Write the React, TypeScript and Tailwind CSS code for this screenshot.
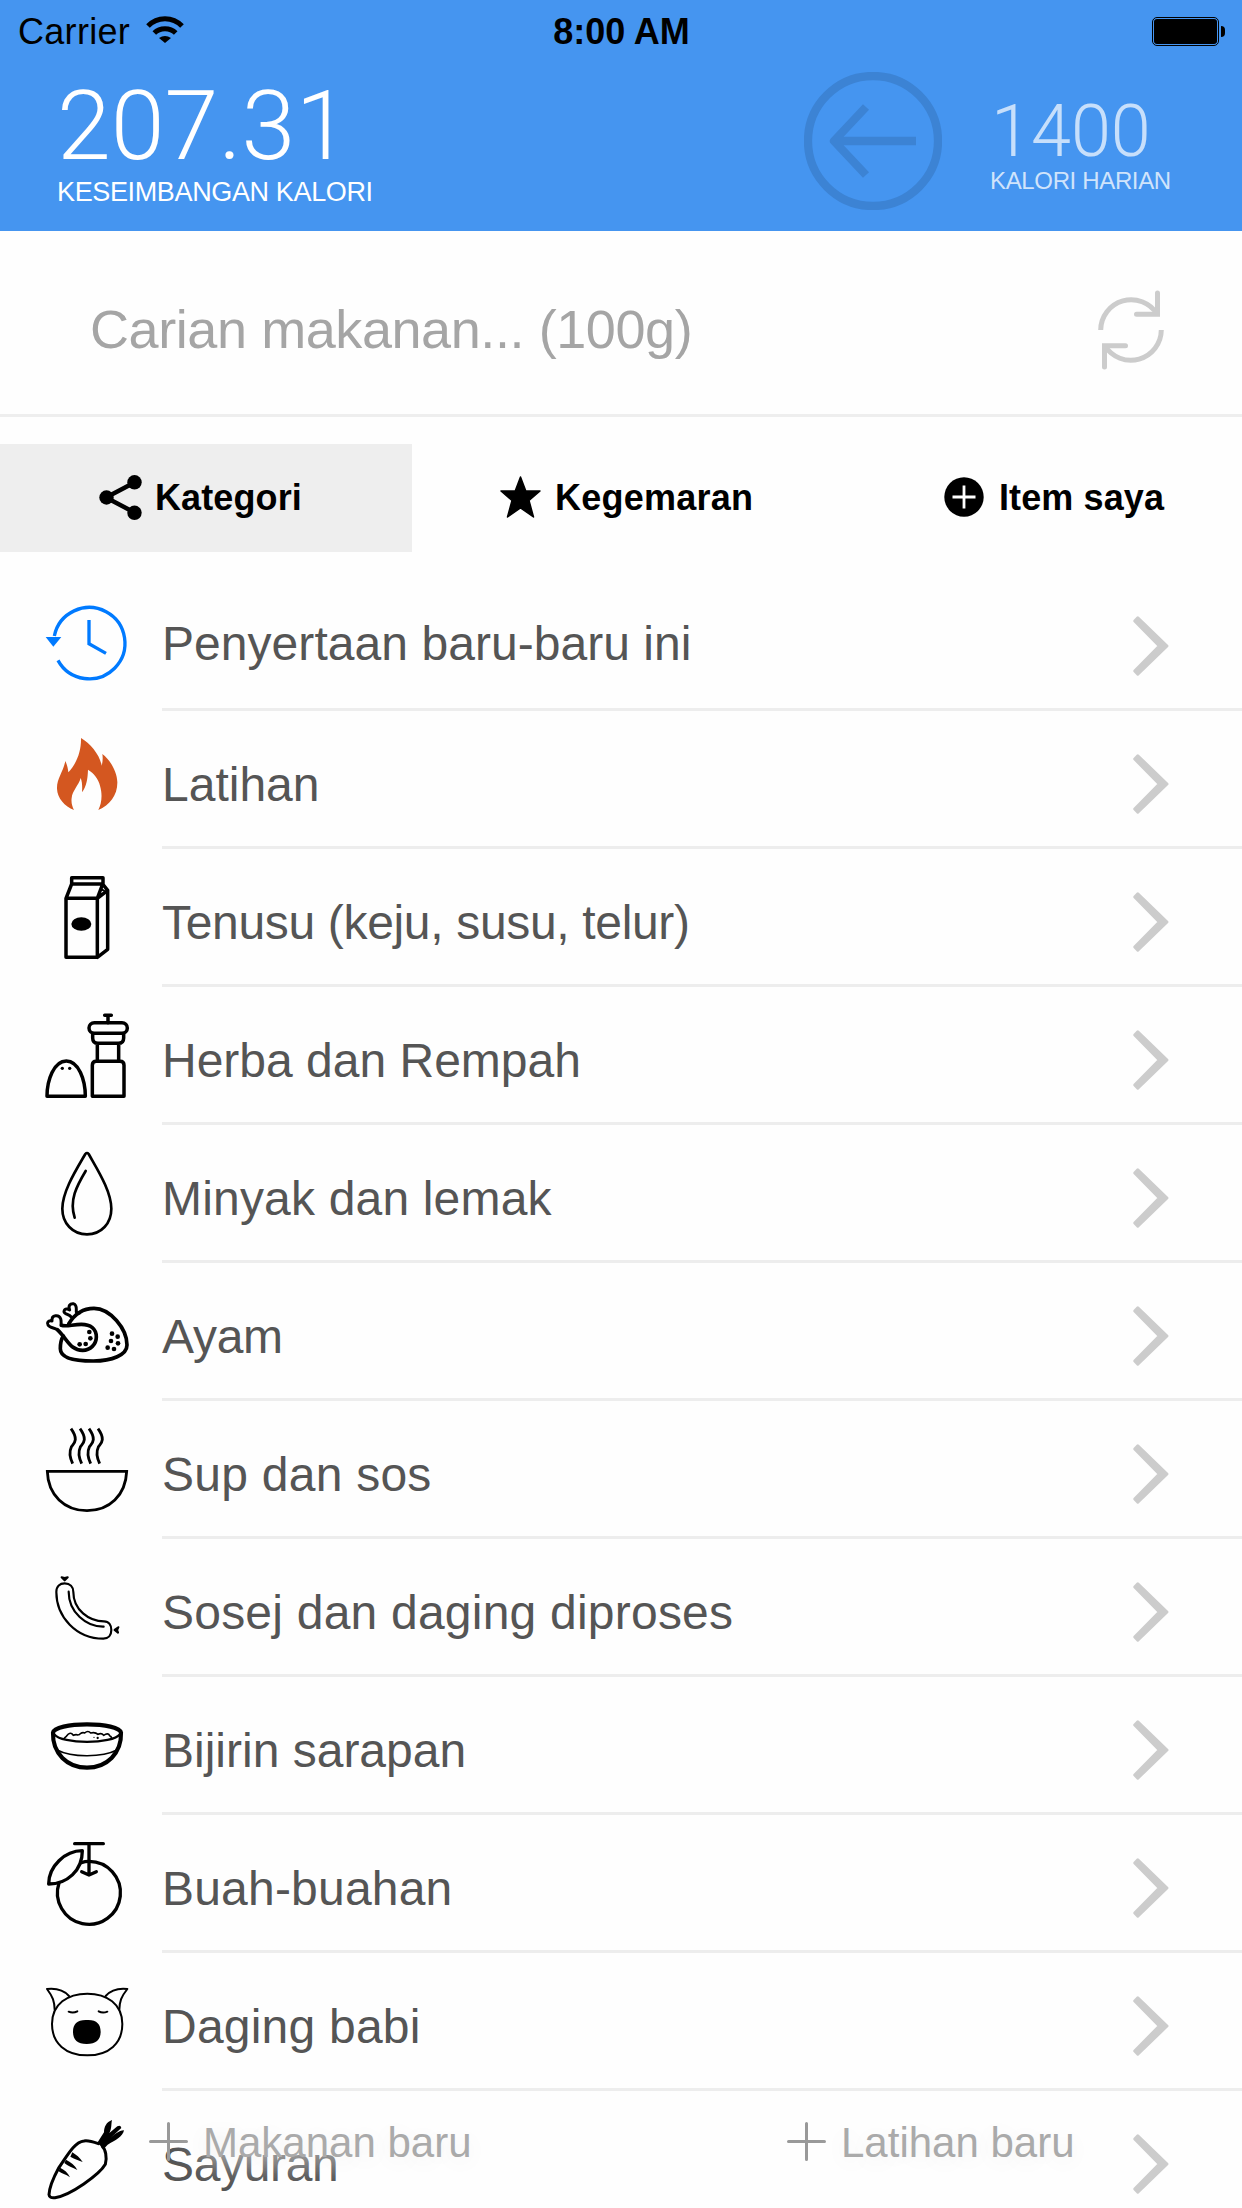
import type { ReactNode } from "react";

type Row = { label: string; tracking: string; viewBox: string; icon: ReactNode };

const stroke = {
  fill: "none",
  stroke: "#000",
  strokeLinejoin: "round" as const,
  strokeLinecap: "round" as const,
};

const rows: Row[] = [
  {
    label: "Penyertaan baru-baru ini",
    tracking: "tracking-[0.05px]",
    viewBox: "-60 -21 486 414",
    icon: (
      <g fill="none" stroke="#007aff" strokeWidth="10">
        <path d="M103 168A107 107 0 1 1 114 241" />
        <path d="M207 120V191L258 220" />
        <path d="M77 171H124L100 200Z" fill="#007aff" stroke="none" />
      </g>
    ),
  },
  {
    label: "Latihan",
    tracking: "tracking-normal",
    viewBox: "-60 393 486 414",
    icon: (
      <path
        fill="#d45720"
        d="M183 474C211 490 240 525 245 557C248 546 249 534 247 522C271 540 291 575 292 606C293 645 270 675 235 690C245 671 248 644 240 617C234 595 222 580 204 569C203 596 200 618 186 637C187 621 187 606 182 594C176 616 157 632 155 654C153 668 157 680 162 690C134 678 112 655 111 626C110 596 130 575 136 543C141 554 144 565 145 577C170 550 184 515 183 474Z"
      />
    ),
  },
  {
    label: "Tenusu (keju, susu, telur)",
    tracking: "tracking-[-0.33px]",
    viewBox: "-60 -3 486 414",
    icon: (
      <g {...stroke} strokeWidth="10.5">
        <path d="M155 102V83H249V102ZM155 102L138 145V322H232V145L248 102M138 145H232M232 322L263 298V121L248 102M232 145L263 121" />
        <path d="M244 118L252 122" strokeWidth="6" />
        <ellipse cx="184" cy="222" rx="30" ry="20" fill="#000" stroke="none" />
      </g>
    ),
  },
  {
    label: "Herba dan Rempah",
    tracking: "tracking-normal",
    viewBox: "-60 411 486 414",
    icon: (
      <g {...stroke} strokeWidth="10.5">
        <path d="M81 739H196C196 690 176 633 139 633C102 633 81 690 81 739Z" />
        <circle cx="127" cy="655" r="5" fill="#000" stroke="none" />
        <circle cx="149" cy="655" r="5" fill="#000" stroke="none" />
        <path d="M254 496H274M264 496V518" />
        <rect x="207" y="518" width="115" height="32" rx="16" />
        <path d="M218 552V564Q218 580 234 580H295Q311 580 311 564V552M232 582V633M296 582V633" />
        <path d="M217 739V646Q217 634 229 634H300Q312 634 312 646V739Z" />
      </g>
    ),
  },
  {
    label: "Minyak dan lemak",
    tracking: "tracking-[0.18px]",
    viewBox: "-60 -15 486 414",
    icon: (
      <g {...stroke} strokeWidth="8">
        <path d="M196 72Q201 66 206 72C231 117 274 183 274 236C274 280 244 313 201 313C158 313 127 280 127 236C127 184 170 117 196 72Z" />
        <path d="M197 123C170 168 147 211 164 263" />
      </g>
    ),
  },
  {
    label: "Ayam",
    tracking: "tracking-[-0.25px]",
    viewBox: "-60 399 486 414",
    icon: (
      <g {...stroke} strokeWidth="11">
        <path d="M146 582C163 553 190 535 222 535C270 535 321 596 321 645C321 675 276 693 220 693C164 693 121 684 121 656C121 638 123 628 130 618" />
        <path d="M124 586C140 591 158 583 184 583C212 583 229 597 229 621C229 643 211 661 188 661C150 661 143 628 112 599" />
        <path d="M124 586C122 579 125 574 122 566C117 553 94 553 96 573C84 570 80 579 84 585C89 594 103 593 112 599" strokeWidth="9" />
        <path d="M153 560C147 553 133 552 132 545C133 535 143 536 149 540C144 527 150 520 160 521C173 525 168 539 169 546Q172 550 179 549" strokeWidth="9" />
        <g fill="#000" stroke="none">
          <circle cx="208" cy="606" r="7" />
          <circle cx="211" cy="625" r="7" />
          <circle cx="179" cy="643" r="7" />
          <circle cx="197" cy="642" r="7" />
          <circle cx="276" cy="611" r="7" />
          <circle cx="293" cy="620" r="7" />
          <circle cx="273" cy="633" r="7" />
          <circle cx="294" cy="640" r="7" />
          <circle cx="263" cy="653" r="7" />
          <circle cx="282" cy="657" r="7" />
        </g>
      </g>
    ),
  },
  {
    label: "Sup dan sos",
    tracking: "tracking-[0.25px]",
    viewBox: "-60 3 486 414",
    icon: (
      <g fill="none" stroke="#000" strokeWidth="8.500">
        <path d="M82 214H320C317 286 268 332 201 332C134 332 84 286 82 214Z" />
        <path d="M153 86C179 122 159 132 154 141C147 156 150 174 158 191" />
        <path d="M180 86C206 122 186 132 181 141C174 156 177 174 185 191" />
        <path d="M207 86C233 122 213 132 208 141C201 156 204 174 212 191" />
        <path d="M234 86C260 122 240 132 235 141C228 156 231 174 239 191" />
      </g>
    ),
  },
  {
    label: "Sosej dan daging diproses",
    tracking: "tracking-[0.22px]",
    viewBox: "-60 417 486 414",
    icon: (
      <g {...stroke} strokeWidth="6.500">
        <path d="M109 576C109 558 120 550 134 550C150 550 160 560 160 576C160 630 207 664 252 664C267 664 274 676 274 690C274 706 265 716 250 716C169 716 109 651 109 576Z" />
        <path d="M146 575C146 637 199 681 251 680" />
        <path d="M125 532L134 541L143 532L134 534ZM295 682L284 690L294 698L291 690Z" fill="#000" />
      </g>
    ),
  },
  {
    label: "Bijirin sarapan",
    tracking: "tracking-normal",
    viewBox: "-60 -39 486 414",
    icon: (
      <g {...stroke}>
        <path
          strokeWidth="12.500"
          d="M99 128C102 113 147 103 201 103C255 103 300 113 303 128C305 190 260 233 201 233C142 233 97 190 99 128Z"
        />
        <path strokeWidth="7" d="M103 133C125 163 277 163 300 133" />
        <path strokeWidth="5" d="M113 181C154 203 249 202 289 181" />
        <path
          strokeWidth="5"
          d="M131 147Q136 141 139 139Q151 122 160 136Q168 132 173 135Q179 135 181 131Q188 126 194 129Q204 120 212 129Q225 125 234 133Q244 127 251 136Q264 127 269 137Q276 140 275 147"
        />
        <circle cx="233" cy="144" r="3.500" fill="#000" stroke="none" />
        <circle cx="222" cy="142" r="2" fill="#000" stroke="none" />
      </g>
    ),
  },
  {
    label: "Buah-buahan",
    tracking: "tracking-[0.2px]",
    viewBox: "-60 375 486 414",
    icon: (
      <g {...stroke} strokeWidth="10">
        <path d="M164 461H250M207 463V555M185 545L207 555L229 545" />
        <path d="M184 518Q195 514 207 514A94.500 94.500 0 1 1 117 579" />
        <path d="M187 482C135 482 86 529 86 582C141 582 187 542 187 482Z" />
      </g>
    ),
  },
  {
    label: "Daging babi",
    tracking: "tracking-[0.22px]",
    viewBox: "-60 -21 486 414",
    icon: (
      <g {...stroke} strokeWidth="6">
        <path d="M202 101C260 101 307 132 307 192C307 250 267 286 202 286C137 286 96 250 96 192C96 132 143 101 202 101Z" />
        <path d="M147 108C132 91 109 84 81 87C99 111 103 124 104 149M257 108C272 91 295 84 322 87C303 111 299 124 298 149" />
        <path d="M146 155Q159 161 172 154M236 154Q248 161 262 155" />
        <path
          stroke="none"
          fill="#000"
          d="M200 180C229 178 242 192 242 215C242 239 228 252 200 252C172 252 159 239 159 215C159 192 172 179 200 180Z"
        />
      </g>
    ),
  },
  {
    label: "Sayuran",
    tracking: "tracking-[-0.35px]",
    viewBox: "-60 393 486 414",
    icon: (
      <g {...stroke} strokeWidth="9">
        <path d="M235 551C218 545 202 541 192 543C162 546 139 592 116 624C103 648 88 682 87 704Q88 715 105 713C151 707 239 643 256 613C262 591 256 567 247 560" />
        <path
          fill="#000"
          stroke="none"
          d="M232 548L252 517C252 501 259 486 276 480C273 492 276 504 268 519L292 499Q302 493 304 504L269 536C283 525 296 511 312 511C309 530 285 542 263 554L251 567Z"
        />
        <path
          fill="#000"
          stroke="none"
          d="M157 577C168 584 180 593 188 606C174 600 162 596 151 590ZM138 599C152 606 165 616 172 630C158 622 143 619 133 609ZM120 623C133 629 144 638 150 652C137 643 125 641 116 634Z"
        />
      </g>
    ),
  },
];

function StatusBar() {
  return (
    <div className="grid h-[63px] grid-cols-3 items-center pr-[17px] pl-[18px] text-[36px] leading-[63px] text-black">
      <div className="flex items-center gap-[16px]">
        <span className="tracking-[0.3px]">Carrier</span>
        <svg className="h-[27px] w-[38px] -translate-y-[2px]" viewBox="0 0 38 27">
          <g fill="none" stroke="#000" strokeWidth="5">
            <path d="M2 10Q9 2.700 19 2.700T36 10" />
            <path d="M8.300 17Q12.500 12.700 19 12.700T29.700 17" />
          </g>
          <path d="M13 22Q19 18 25 22L19 27Z" />
        </svg>
      </div>
      <div className="text-center text-[36px] font-bold">8:00 AM</div>
      <div className="flex items-center justify-end gap-[2px]">
        <div className="h-[29px] w-[67px] rounded-[5px] border border-black p-px">
          <div className="h-full w-full rounded-[3px] bg-black" />
        </div>
        <div className="h-[11px] w-[4px] rounded-r-full bg-black" />
      </div>
    </div>
  );
}

function Header() {
  return (
    <header className="h-[231px] bg-[#4595f0]">
      <StatusBar />
      <div className="flex justify-between pr-[70px] pl-[57px] text-white">
        <div className="pt-[7px]">
          <div className="h-[112px] font-['Roboto'] text-[97px] leading-[112px] font-light">207.31</div>
          <div className="h-[20px] text-[27px] leading-[20px] tracking-[-0.36px]">KESEIMBANGAN KALORI</div>
        </div>
        <div className="flex">
          <svg className="mt-[9px] mr-[47px] h-[138px] w-[138px]" viewBox="0 0 138 138">
            <g fill="none" stroke="#3c83d4" strokeWidth="8.300" strokeLinejoin="round">
              <circle cx="69" cy="69" r="65" />
              <path d="M112 69H30M62 35L30 69L62 103" />
            </g>
          </svg>
          <div className="w-[183px] pt-[29px] text-white/70">
            <div className="h-[79px] pl-[2px] font-['Roboto'] text-[72px] leading-[79px] font-light">1400</div>
            <div className="h-[20px] pl-px text-[24px] leading-[20px] tracking-[-0.35px] whitespace-nowrap text-white/75">
              KALORI HARIAN
            </div>
          </div>
        </div>
      </div>
    </header>
  );
}

function SearchBar() {
  return (
    <div className="flex h-[186px] items-center justify-between border-b-[3px] border-[#eee] pt-[12px] pr-[76px] pl-[90px]">
      <span className="text-[54px] leading-[60px] tracking-[-0.42px] text-[#a5a5a5]">Carian makanan... (100g)</span>
      <svg className="mt-[3px] h-[82px] w-[70px]" viewBox="1096 289 70 82">
        <g fill="none" stroke="#ccc" strokeWidth="5" strokeLinecap="round">
          <path strokeLinecap="butt" d="M1100.700 330A30.500 30.500 0 0 1 1157 314M1161.300 330A30.500 30.500 0 0 1 1105 346" />
          <path d="M1157.500 293V314.300H1136.500M1104.500 367V345.700H1125.500" />
        </g>
      </svg>
    </div>
  );
}

function Tabs() {
  return (
    <nav className="mt-[27px] grid h-[108px] grid-cols-[412px_1fr_1fr] text-[36px] font-bold text-black">
      <div className="flex items-center gap-[13px] bg-[#eee] pl-[99px]">
        <svg className="h-[45px] w-[43px] -translate-y-px" viewBox="99 474 43 45">
          <path d="M134.500 481.500L106 496.500L134.500 511.500" fill="none" stroke="#000" strokeWidth="4.500" />
          <circle cx="134.500" cy="481.300" r="7.200" />
          <circle cx="106.500" cy="496.500" r="7.200" />
          <circle cx="134.500" cy="511.800" r="7.200" />
        </svg>
        <span className="tracking-[0.12px]">Kategori</span>
      </div>
      <div className="flex items-center gap-[14px] pl-[88px]">
        <svg className="h-[42px] w-[41px] -translate-y-px" viewBox="0 0 41 42">
          <path
            d="M20.500 1L25.800 15H40L29 24.500L33.500 41L20.500 32L7.500 41L12 24.500L1 15H15.200Z"
            strokeWidth="1.500"
            stroke="#000"
            strokeLinejoin="round"
          />
        </svg>
        <span className="tracking-[0.25px]">Kegemaran</span>
      </div>
      <div className="flex items-center gap-[14px] pl-[117px]">
        <svg className="h-[40px] w-[40px] -translate-y-px" viewBox="0 0 40 40">
          <circle cx="20" cy="20" r="19.700" />
          <path d="M20 8.500V31.500M8.500 20H31.500" stroke="#fff" strokeWidth="2.800" />
        </svg>
        <span className="pl-px tracking-[0.1px] whitespace-nowrap">Item saya</span>
      </div>
    </nav>
  );
}

function CategoryRow({ row, first }: { row: Row; first: boolean }) {
  return (
    <li className={first ? "flex h-[159px] pt-[21px]" : "flex h-[138px]"}>
      <svg className="h-[138px] w-[162px] shrink-0" viewBox={row.viewBox}>
        {row.icon}
      </svg>
      <div className="flex flex-1 items-center justify-between border-b-[3px] border-[#ededed] pr-[72px]">
        <span className={`text-[48px] leading-[60px] text-[#555] ${row.tracking} ${first ? "pt-[6px]" : "pt-[12px]"}`}>
          {row.label}
        </span>
        <svg className="mt-[11px] h-[62px] w-[38px]" viewBox="0 0 38 62">
          <path
            d="M5.800 2.800L35 31L5.800 59.200L2.700 56L27.300 31L2.700 6Z"
            fill="#ccc"
            stroke="#ccc"
            strokeWidth="3"
            strokeLinejoin="round"
          />
        </svg>
      </div>
    </li>
  );
}

function AddButton({ label }: { label: string }) {
  return (
    <button className="flex items-center text-[42px] leading-[60px] text-[#aaa] [text-shadow:0_4px_22px_#eee,0_4px_30px_#fafafa]">
      <svg className="mr-[15px] h-[39px] w-[39px] -translate-y-[1px]" viewBox="0 0 39 39">
        <path d="M19.500 1.500V37.500M1.500 19.500H37.500" stroke="#999" strokeWidth="3" strokeLinecap="round" />
      </svg>
      <span className="translate-y-px">{label}</span>
    </button>
  );
}

export default function App() {
  return (
    <div className="relative h-[2208px] w-[1242px] overflow-hidden bg-[#fefefe] font-['Liberation_Sans',Arial,sans-serif]">
      <Header />
      <SearchBar />
      <Tabs />
      <ul>
        {rows.map((row, i) => (
          <CategoryRow key={row.label} row={row} first={i === 0} />
        ))}
      </ul>
      <div className="absolute inset-x-0 bottom-0 grid h-[132px] grid-cols-[638px_1fr] items-center pl-[149px]">
        <AddButton label="Makanan baru" />
        <AddButton label="Latihan baru" />
      </div>
    </div>
  );
}
